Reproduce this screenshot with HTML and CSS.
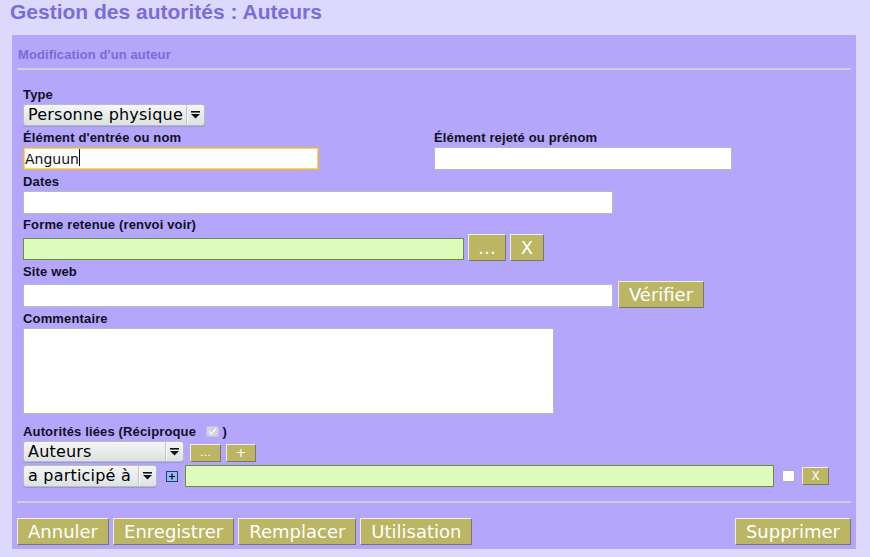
FILE: index.html
```html
<!DOCTYPE html>
<html lang="fr">
<head>
<meta charset="utf-8">
<title>Gestion des autorités : Auteurs</title>
<link rel="stylesheet" href="styles.css">
</head>
<body>
<h1 class="page-title">Gestion des autorités : Auteurs</h1>
<div class="panel">
  <div class="panel-title">Modification d'un auteur</div>
  <div class="rule"></div>
  <div class="fields">
    <div class="group g-type">
      <label class="lbl">Type</label>
      <div class="select sel-type"><span class="sel-text">Personne physique</span><span class="sel-arrow"><svg width="9" height="8" viewBox="0 0 9 8"><rect x="0" y="0" width="9" height="1.6" fill="#111"/><polygon points="0,3 9,3 4.5,7.6" fill="#111"/></svg></span></div>
    </div>
    <div class="group g-names">
      <div class="col col-1">
        <label class="lbl">Élément d'entrée ou nom</label>
        <span class="focus-wrap"><input class="inp inp-name focused" type="text" value="Anguun"><span class="caret"></span></span>
      </div>
      <div class="col col-2">
        <label class="lbl">Élément rejeté ou prénom</label>
        <input class="inp inp-first" type="text" value="">
      </div>
    </div>
    <div class="group g-dates">
      <label class="lbl">Dates</label>
      <input class="inp inp-wide" type="text" value="">
    </div>
    <div class="group g-forme">
      <label class="lbl">Forme retenue (renvoi voir)</label>
      <div class="row row-btns">
        <input class="inp inp-green inp-forme" type="text" value="">
        <button class="btn btn-dots" type="button">…</button>
        <button class="btn btn-x" type="button">X</button>
      </div>
    </div>
    <div class="group g-site">
      <label class="lbl">Site web</label>
      <div class="row row-btns">
        <input class="inp inp-wide" type="text" value="">
        <button class="btn btn-verif" type="button">Vérifier</button>
      </div>
    </div>
    <div class="group g-comment">
      <label class="lbl">Commentaire</label>
      <textarea class="txt"></textarea>
    </div>
    <div class="group g-linked">
      <label class="lbl">Autorités liées (Réciproque <span class="cb-disabled"><svg width="13" height="11" viewBox="0 0 13 11"><rect x="0.5" y="0.5" width="12" height="10" rx="1.5" fill="#d3d0e6" stroke="#c4c1da"/><path d="M3 5.5 L5.5 8 L10 2.5" fill="none" stroke="#f4f4f8" stroke-width="1.6"/></svg></span> )</label>
      <div class="row row-auteurs">
        <div class="select sel-auteurs"><span class="sel-text">Auteurs</span><span class="sel-arrow"><svg width="9" height="8" viewBox="0 0 9 8"><rect x="0" y="0" width="9" height="1.6" fill="#111"/><polygon points="0,3 9,3 4.5,7.6" fill="#111"/></svg></span></div>
        <button class="btn btn-sm btn-sm-dots" type="button">…</button>
        <button class="btn btn-sm btn-sm-plus" type="button">+</button>
      </div>
      <div class="row row-link">
        <div class="select sel-role"><span class="sel-text">a participé à</span><span class="sel-arrow"><svg width="9" height="8" viewBox="0 0 9 8"><rect x="0" y="0" width="9" height="1.6" fill="#111"/><polygon points="0,3 9,3 4.5,7.6" fill="#111"/></svg></span></div>
        <span class="plus-icon"><svg width="12" height="11" viewBox="0 0 12 11"><rect x="0.5" y="0.5" width="11" height="10" fill="#8fbef5" stroke="#2b3a66"/><path d="M6 2.5 V8.5 M3 5.5 H9" stroke="#000" stroke-width="1.2"/></svg></span>
        <input class="inp inp-green inp-link" type="text" value="">
        <span class="cb-empty"></span>
        <button class="btn btn-sm btn-sm-x" type="button">X</button>
      </div>
    </div>
  </div>
  <div class="rule rule-bottom"></div>
  <div class="actions">
    <button class="btn btn-big" type="button">Annuler</button>
    <button class="btn btn-big" type="button">Enregistrer</button>
    <button class="btn btn-big" type="button">Remplacer</button>
    <button class="btn btn-big" type="button">Utilisation</button>
    <button class="btn btn-big btn-delete" type="button">Supprimer</button>
  </div>
</div>
</body>
</html>
```
FILE: styles.css
```css
html, body {
  margin: 0;
  padding: 0;
}
body {
  background: #ddd9fc;
  font-family: "Liberation Sans", Arial, sans-serif;
  color: #111;
}
.page-title {
  margin: 0 0 11px 10px;
  font: 700 21px/24px "Liberation Sans", Arial, sans-serif;
  color: #7b6cd8;
}
.panel {
  margin-left: 12px;
  width: 844px;
  box-sizing: border-box;
  padding: 12px 5px 4px 5px;
  background: #b3a6fb;
}
.panel-title {
  font: 700 13px/15px "Liberation Sans", Arial, sans-serif;
  letter-spacing: 0.1px;
  color: #7b6cd8;
  padding-left: 1px;
}
.rule {
  margin-top: 6px;
  height: 2px;
  background: #cfcfd8;
}
.rule-bottom {
  margin-top: 14px;
}
.fields {
  padding-left: 6px;
}
.lbl {
  display: block;
  font: 700 13px/15px "Liberation Sans", Arial, sans-serif;
  letter-spacing: 0.15px;
  color: #120f24;
  margin-bottom: 2px;
  white-space: nowrap;
}
.g-type { margin-top: 17px; }
.g-names { margin-top: 4px; display: grid; grid-template-columns: 411px auto; }
.g-dates { margin-top: 4px; }
.g-forme { margin-top: 3px; }
.g-site { margin-top: 3px; }
.g-comment { margin-top: 3px; }
.g-linked { margin-top: 10px; }

.row {
  display: flex;
}
.row-btns {
  margin-top: 1px;
  align-items: flex-end;
}
.row-btns .inp {
  margin-bottom: 1px;
}

.inp {
  display: block;
  box-sizing: border-box;
  height: 23px;
  margin: 0;
  padding: 0 2px;
  border: 1px solid #aebdc6;
  background: #fff;
  font: 14px/21px "DejaVu Sans", sans-serif;
  color: #111;
  outline: none;
}
.inp-name { width: 296px; }
.inp-first { width: 298px; }
.inp-wide { width: 590px; }
.focused {
  border-color: #ebb63e;
  box-shadow: inset 0 0 0 1px #f3d27e;
  padding-left: 1px;
}
.focus-wrap {
  position: relative;
  display: block;
  width: 296px;
}
.caret {
  position: absolute;
  left: 56px;
  top: 2px;
  width: 1px;
  height: 17px;
  background: #000;
}
.inp-green {
  background: #ddfcbb;
  border: 1px solid #6f8c3e;
  height: 22px;
}
.inp-forme { width: 441px; }
.inp-link { width: 589px; margin-left: 7px; }

.txt {
  display: block;
  box-sizing: border-box;
  width: 531px;
  height: 86px;
  margin: 1px 0 0 0;
  border: 1px solid #aebdc6;
  background: #fff;
  resize: none;
  outline: none;
}

.select {
  display: flex;
  box-sizing: border-box;
  height: 22px;
  border: 1px solid #b8bcc4;
  border-radius: 3px;
  background: linear-gradient(#f5f6f6, #dde1e2);
  font: 16px/20px "DejaVu Sans", sans-serif;
  letter-spacing: 0.2px;
  color: #000;
  box-shadow: 0 1px 0 rgba(120, 110, 170, 0.35);
}
.sel-text {
  flex: 1;
  padding-left: 4px;
  white-space: nowrap;
  overflow: hidden;
}
.sel-arrow {
  width: 17px;
  flex: none;
  border-left: 1px solid #c3c7c9;
  box-shadow: inset 1px 0 0 #f6f7f7;
  display: flex;
  align-items: center;
  justify-content: center;
}
.sel-type { width: 182px; }
.sel-auteurs { width: 161px; height: 21px; line-height: 19px; }
.sel-role { width: 134px; }

.btn {
  box-sizing: border-box;
  margin: 0;
  background: #bcb664;
  color: #fff;
  border: 1px solid;
  border-color: #eeeee2 #77776a #77776a #eeeee2;
  font: 18px/25px "DejaVu Sans", sans-serif;
  height: 27px;
  padding: 0 10px;
  cursor: pointer;
  white-space: nowrap;
}
.btn-dots { width: 38px; padding: 0; margin-left: 4px; }
.btn-x { width: 34px; padding: 0; margin-left: 4px; }
.btn-verif { margin-left: 5px; width: 86px; padding: 0; }

.row-auteurs {
  margin-top: 1px;
  align-items: flex-end;
}
.btn-sm {
  height: 18px;
  font: 11px/16px "DejaVu Sans", sans-serif;
  padding: 0;
}
.btn-sm-dots { width: 31px; margin-left: 6px; }
.btn-sm-plus { width: 30px; margin-left: 5px; font-size: 13px; }
.row-link {
  margin-top: 3px;
  align-items: center;
}
.plus-icon {
  display: block;
  width: 12px;
  height: 11px;
  margin-left: 9px;
}
.plus-icon svg, .cb-disabled svg { display: block; }
.cb-disabled {
  display: inline-block;
  vertical-align: -1px;
  margin-left: 6px;
  width: 13px;
  height: 11px;
}
.cb-empty {
  display: block;
  box-sizing: border-box;
  width: 13px;
  height: 12px;
  margin-left: 8px;
  background: #fff;
  border: 1px solid #9eb0c4;
  border-radius: 2px;
}
.btn-sm-x { width: 27px; margin-left: 7px; font-size: 12px; }

.actions {
  margin-top: 15px;
  display: flex;
  gap: 4px;
}
.btn-big { padding: 0 10px; }
.btn-delete { margin-left: auto; }
```
